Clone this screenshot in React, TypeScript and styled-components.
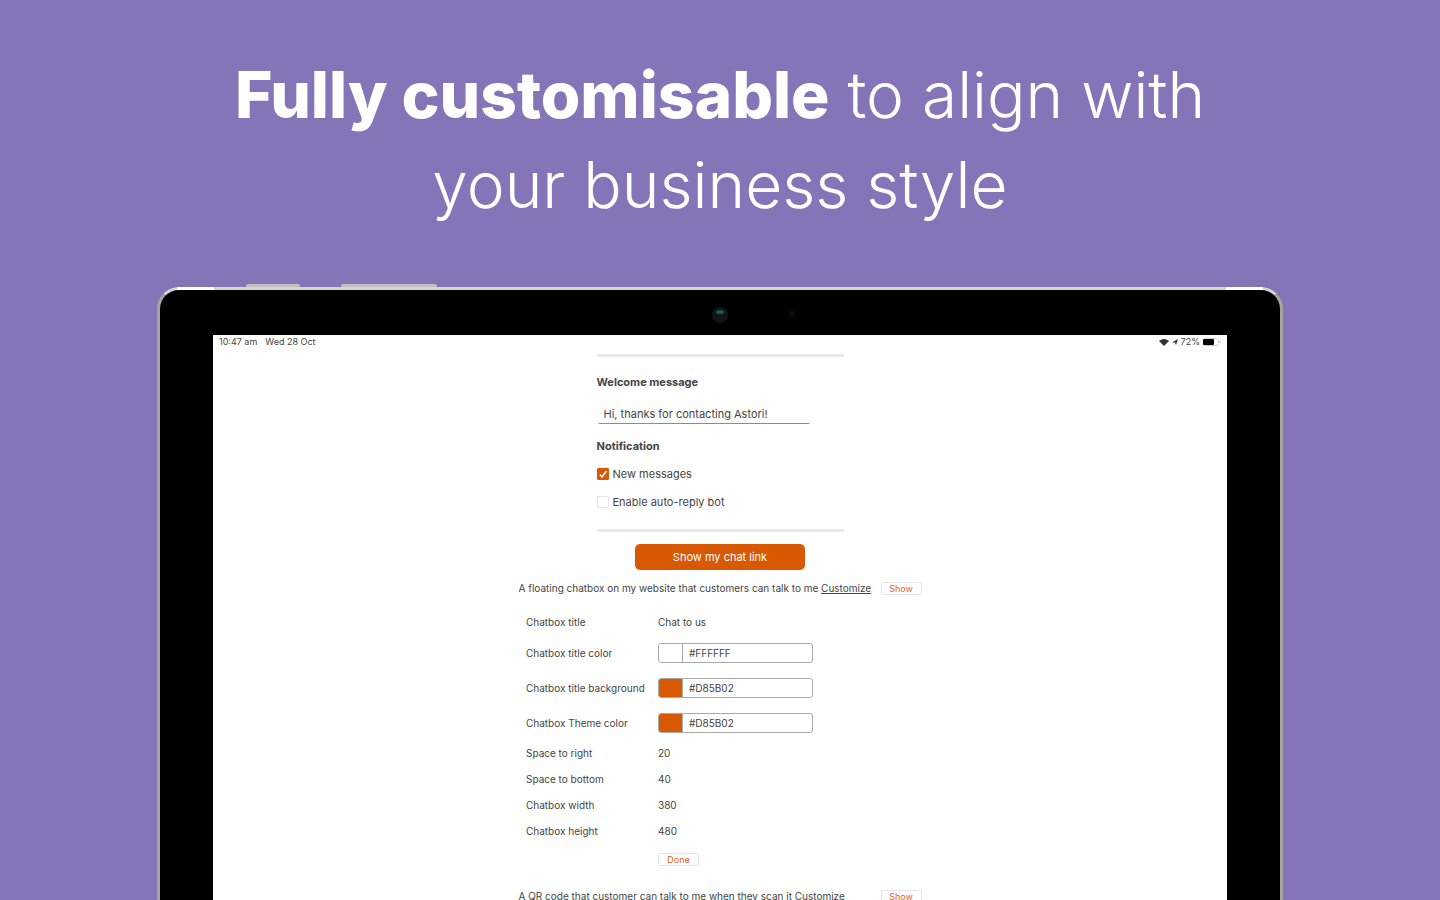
import React from "react";
import styled, { createGlobalStyle } from "styled-components";

const GlobalStyle = createGlobalStyle`
  *, *::before, *::after { box-sizing: border-box; }
  body {
    margin: 0;
    background: #8674b9;
    font-family: Inter, "Open Sans", sans-serif;
  }
  button, input { font-family: inherit; }
`;

const Page = styled.main`
  display: flex;
  flex-direction: column;
  align-items: center;
  height: 100vh;
  overflow: hidden;
  padding: 50px 24px 0;
`;

const Headline = styled.h1`
  flex: none;
  max-width: 1040px;
  margin: 0 0 57px;
  color: #fff;
  font-size: 64px;
  font-weight: 300;
  line-height: 90px;
  text-align: center;

  strong { font-weight: 800; }
`;

const Tablet = styled.div`
  position: relative;
  flex: none;
  width: 100%;
  max-width: 1126px;
  padding: 45px 53px 0;
  border: 3px solid #a6a49f;
  border-top-color: #d6d4cf;
  border-bottom: 0;
  border-radius: 22px 22px 0 0;
  background: #000;
`;

const SideButton = styled.span<{ $left: number; $width: number }>`
  position: absolute;
  top: -6px;
  left: ${(p) => p.$left}px;
  width: ${(p) => p.$width}px;
  height: 3px;
  border-radius: 2px 2px 0 0;
  background: #c2bfc0;
`;

const CornerShine = styled.span<{ $side: "left" | "right" }>`
  position: absolute;
  top: -3px;
  ${(p) => p.$side}: 17px;
  width: 37px;
  height: 3px;
  background: #fff;
`;

const Camera = styled.svg`
  position: absolute;
  top: 16px;
  left: 50%;
  width: 90px;
  height: 18px;
  margin-left: -9px;
`;

const Screen = styled.div`
  display: flex;
  flex-direction: column;
  align-items: center;
  background: #fff;
  color: #444;
  font-size: 10px;
  line-height: 14px;
`;

const StatusBar = styled.header`
  display: flex;
  align-items: center;
  justify-content: space-between;
  align-self: stretch;
  height: 14px;
  padding: 0 6px;
  font-size: 9px;
`;

const StatusGroup = styled.div<{ $gap: number }>`
  display: flex;
  align-items: center;
  gap: ${(p) => p.$gap}px;
`;

const Form = styled.form`
  display: flex;
  flex-direction: column;
  width: 247px;
  margin-top: 5px;
`;

const Divider = styled.hr`
  width: 100%;
  height: 3px;
  margin: 0;
  border: 0;
  background: #e9e9e9;
`;

const FieldLabel = styled.label`
  margin-top: 17px;
  font-size: 11px;
  font-weight: 700;
  line-height: 16px;
`;

const MessageInput = styled.input`
  width: 212px;
  height: 20px;
  margin: 14px 0 0 1px;
  padding: 0 6px;
  border: 0;
  border-bottom: 1px solid #8c8c8c;
  border-radius: 2px;
  outline: 0;
  background: #fff;
  color: #444;
  font-size: 11px;
`;

const Group = styled.fieldset`
  display: flex;
  flex-direction: column;
  gap: 12px;
  margin: 14px 0 19px;
  padding: 0;
  border: 0;
`;

const GroupTitle = styled.legend`
  margin-bottom: 12px;
  padding: 0;
  font-size: 11px;
  font-weight: 700;
  line-height: 16px;
`;

const CheckLabel = styled.label`
  display: flex;
  align-items: center;
  gap: 4px;
  font-size: 11px;
  line-height: 16px;
`;

const CheckBox = styled.span`
  position: relative;
  display: flex;
  width: 12px;
  height: 12px;

  input {
    width: 12px;
    height: 12px;
    margin: 0;
    appearance: none;
    border: 1px solid #e4e4e4;
    border-radius: 1px;
    background: #fff;
  }
  input:checked { border-color: #d95802; background: #d95802; }
  svg { position: absolute; inset: 0; pointer-events: none; }
`;

const LinkButton = styled.button`
  width: 170px;
  height: 26px;
  margin: 12px 0 11px;
  padding: 0;
  border: 0;
  border-radius: 5px;
  background: #d95802;
  color: #fff;
  font-size: 11px;
`;

const Option = styled.section`
  display: flex;
  align-items: center;
  justify-content: space-between;
  width: 403px;
  height: 14px;
  white-space: nowrap;
`;

const OptionText = styled.p`
  margin: 0;

  a { color: inherit; }
`;

const SmallButton = styled.button`
  width: 41px;
  height: 13px;
  padding: 0;
  border: 1px solid #e6e6e6;
  border-radius: 2px;
  background: #fff;
  color: #e0622a;
  font-size: 9px;
  line-height: 11px;
`;

const Settings = styled.div`
  display: flex;
  flex-direction: column;
  width: 388px;
  margin: 14px 0 15px;
`;

const SettingRow = styled.div<{ $height: number }>`
  display: grid;
  grid-template-columns: 132px 1fr;
  align-items: center;
  height: ${(p) => p.$height}px;
`;

const ColorField = styled.div`
  display: flex;
  width: 155px;
  height: 20px;
  overflow: hidden;
  border: 1px solid #a9a9a9;
  border-radius: 3px;
`;

const Swatch = styled.span<{ $color: string }>`
  width: 24px;
  border-right: 1px solid #a9a9a9;
  background: ${(p) => p.$color};
`;

const PlainInput = styled.input`
  flex: 1;
  min-width: 0;
  padding: 0 6px;
  border: 0;
  outline: 0;
  background: transparent;
  color: #444;
  font-size: 10px;
`;

const ValueInput = styled(PlainInput)`
  width: 155px;
  padding: 0;
`;

type Setting = { id: string; label: string; value: string; height: number; color?: string };

const settings: Setting[] = [
  { id: "title", label: "Chatbox title", value: "Chat to us", height: 26 },
  { id: "title-color", label: "Chatbox title color", value: "#FFFFFF", height: 35, color: "#fff" },
  { id: "title-bg", label: "Chatbox title background", value: "#D85B02", height: 35, color: "#d95802" },
  { id: "theme", label: "Chatbox Theme color", value: "#D85B02", height: 35, color: "#d95802" },
  { id: "right", label: "Space to right", value: "20", height: 26 },
  { id: "bottom", label: "Space to bottom", value: "40", height: 26 },
  { id: "width", label: "Chatbox width", value: "380", height: 26 },
  { id: "height", label: "Chatbox height", value: "480", height: 26 },
];

export default function App() {
  return (
    <>
      <GlobalStyle />
      <Page>
        <Headline>
          <strong>Fully customisable</strong> to align with
          <br />
          your business style
        </Headline>
        <Tablet>
          <SideButton $left={86} $width={54} />
          <SideButton $left={181} $width={96} />
          <CornerShine $side="left" />
          <CornerShine $side="right" />
          <Camera viewBox="0 0 90 18" aria-hidden="true">
            <circle cx="9" cy="9" r="8" fill="#0c1517" />
            <ellipse cx="9" cy="6" rx="4" ry="2" fill="#2b5650" />
            <circle cx="81" cy="8" r="3" fill="#0e0e0e" />
          </Camera>
          <Screen>
            <StatusBar>
              <StatusGroup $gap={8}>
                <span>10:47 am</span>
                <span>Wed 28 Oct</span>
              </StatusGroup>
              <StatusGroup $gap={3}>
                <svg width="10" height="7" viewBox="0 0 10 7" aria-hidden="true">
                  <path d="M0 2Q5-2 10 2L5 7Z" fill="#333" />
                </svg>
                <svg width="6" height="6" viewBox="0 0 6 6" aria-hidden="true">
                  <path d="M0 3.5 6 0 4 6 3 3.5Z" fill="#333" />
                </svg>
                <span>72%</span>
                <svg width="18" height="8" viewBox="0 0 18 8" aria-hidden="true">
                  <rect x=".5" y=".5" width="15" height="7" rx="2" fill="none" stroke="#ccc" />
                  <rect x="0" y="1" width="11" height="6" rx="1" fill="#000" />
                  <path d="M17 3v2" stroke="#aaa" />
                </svg>
              </StatusGroup>
            </StatusBar>
            <Form onSubmit={(e) => e.preventDefault()}>
              <Divider />
              <FieldLabel htmlFor="welcome">Welcome message</FieldLabel>
              <MessageInput id="welcome" defaultValue="Hi, thanks for contacting Astori!" />
              <Group>
                <GroupTitle>Notification</GroupTitle>
                <CheckLabel>
                  <CheckBox>
                    <input type="checkbox" defaultChecked />
                    <svg viewBox="0 0 12 12" aria-hidden="true">
                      <path d="M3 6.5 5 9 9.500 3" fill="none" stroke="#fff" strokeWidth="1.5" />
                    </svg>
                  </CheckBox>
                  New messages
                </CheckLabel>
                <CheckLabel>
                  <CheckBox>
                    <input type="checkbox" />
                  </CheckBox>
                  Enable auto-reply bot
                </CheckLabel>
              </Group>
              <Divider />
            </Form>
            <LinkButton type="button">Show my chat link</LinkButton>
            <Option>
              <OptionText>
                A floating chatbox on my website that customers can talk to me <a href="#chatbox">Customize</a>
              </OptionText>
              <SmallButton type="button">Show</SmallButton>
            </Option>
            <Settings>
              {settings.map((s) => (
                <SettingRow key={s.id} $height={s.height}>
                  <label htmlFor={s.id}>{s.label}</label>
                  {s.color ? (
                    <ColorField>
                      <Swatch $color={s.color} />
                      <PlainInput id={s.id} defaultValue={s.value} />
                    </ColorField>
                  ) : (
                    <ValueInput id={s.id} defaultValue={s.value} />
                  )}
                </SettingRow>
              ))}
              <SettingRow $height={30}>
                <span />
                <SmallButton type="button">Done</SmallButton>
              </SettingRow>
            </Settings>
            <Option>
              <OptionText>
                A QR code that customer can talk to me when they scan it <a href="#qr">Customize</a>
              </OptionText>
              <SmallButton type="button">Show</SmallButton>
            </Option>
          </Screen>
        </Tablet>
      </Page>
    </>
  );
}
